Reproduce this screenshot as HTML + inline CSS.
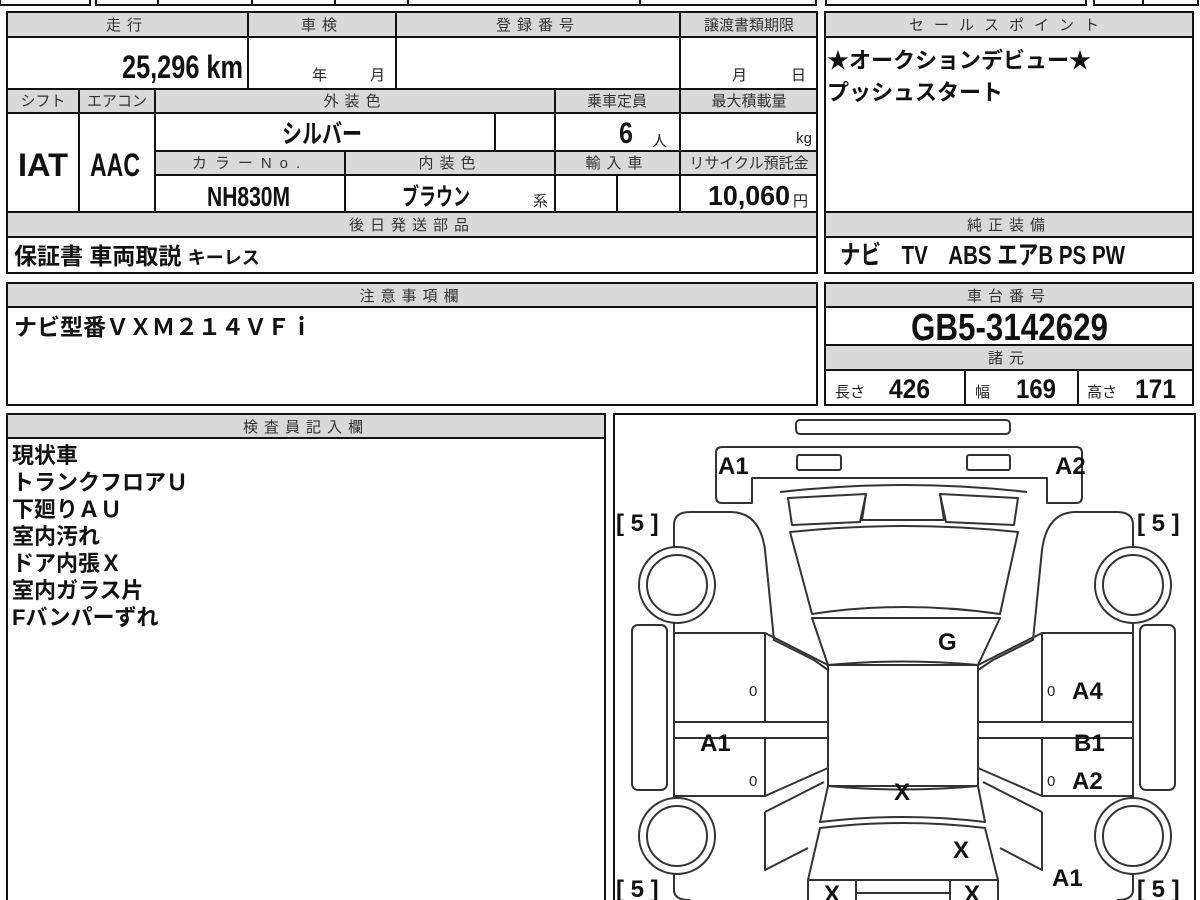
<!DOCTYPE html>
<html><head><meta charset="utf-8"><style>
html,body{margin:0;padding:0;background:#fff;width:1200px;height:900px;overflow:hidden}
svg{display:block}
.h{font-family:"Liberation Sans","Noto Sans CJK JP",sans-serif;font-size:15px;fill:#333;text-anchor:middle;letter-spacing:6px}
.b{font-family:"Liberation Sans Narrow","Liberation Sans","Noto Sans CJK JP",sans-serif;font-weight:bold;fill:#111}
.j{font-family:"Liberation Sans","Noto Sans CJK JP",sans-serif;font-weight:bold;fill:#111}
.s{font-family:"Liberation Sans","Noto Sans CJK JP",sans-serif;fill:#222;font-size:15px}
</style></head><body>
<svg width="1200" height="900" viewBox="0 0 1200 900" xmlns="http://www.w3.org/2000/svg">
<g stroke="#111" stroke-width="2" fill="none">
<rect x="0" y="-5" width="90" height="10"/>
<rect x="96" y="-5" width="720" height="10"/>
<line x1="158" y1="0" x2="158" y2="5"/><line x1="252" y1="0" x2="252" y2="5"/><line x1="335" y1="0" x2="335" y2="5"/><line x1="408" y1="0" x2="408" y2="5"/><line x1="640" y1="0" x2="640" y2="5"/>
<rect x="826" y="-5" width="260" height="10"/>
<rect x="1094" y="-5" width="104" height="10"/><line x1="1143" y1="0" x2="1143" y2="5"/>
</g>
<g fill="#d9d9d9">
<rect x="7" y="12" width="810" height="25"/>
<rect x="7" y="89" width="810" height="24"/>
<rect x="155" y="151" width="662" height="24"/>
<rect x="7" y="212" width="810" height="25"/>
<rect x="825" y="12" width="368" height="25"/>
<rect x="825" y="212" width="368" height="25"/>
<rect x="7" y="283" width="810" height="24"/>
<rect x="825" y="283" width="368" height="24"/>
<rect x="825" y="345" width="368" height="25"/>
<rect x="7" y="414" width="598" height="24"/>
</g>
<g stroke="#111" stroke-width="2" fill="none">
<rect x="7" y="12" width="810" height="261"/>
<line x1="7" y1="37" x2="817" y2="37"/><line x1="7" y1="89" x2="817" y2="89"/><line x1="7" y1="113" x2="817" y2="113"/>
<line x1="155" y1="151" x2="817" y2="151"/><line x1="155" y1="175" x2="817" y2="175"/>
<line x1="7" y1="212" x2="817" y2="212"/><line x1="7" y1="237" x2="817" y2="237"/>
<line x1="248" y1="12" x2="248" y2="89"/><line x1="396" y1="12" x2="396" y2="89"/><line x1="680" y1="12" x2="680" y2="212"/>
<line x1="79" y1="89" x2="79" y2="212"/><line x1="155" y1="89" x2="155" y2="212"/><line x1="555" y1="89" x2="555" y2="212"/>
<line x1="495" y1="113" x2="495" y2="151"/><line x1="345" y1="151" x2="345" y2="212"/><line x1="617" y1="175" x2="617" y2="212"/>
<rect x="825" y="12" width="368" height="261"/>
<line x1="825" y1="37" x2="1193" y2="37"/><line x1="825" y1="212" x2="1193" y2="212"/><line x1="825" y1="237" x2="1193" y2="237"/>
<rect x="7" y="283" width="810" height="122"/><line x1="7" y1="307" x2="817" y2="307"/>
<rect x="825" y="283" width="368" height="122"/><line x1="825" y1="307" x2="1193" y2="307"/><line x1="825" y1="345" x2="1193" y2="345"/><line x1="825" y1="370" x2="1193" y2="370"/>
<line x1="965" y1="370" x2="965" y2="405"/><line x1="1078" y1="370" x2="1078" y2="405"/>
<rect x="7" y="414" width="598" height="490"/><line x1="7" y1="438" x2="605" y2="438"/>
<rect x="614" y="414" width="581" height="490"/>
</g>
<text class="h" x="127" y="30">走行</text><text class="h" x="322" y="30">車検</text><text class="h" x="538" y="30">登録番号</text>
<text class="h" x="749" y="30" style="letter-spacing:0">譲渡書類期限</text>
<text class="h" x="43" y="106" style="letter-spacing:0">シフト</text><text class="h" x="117" y="106" style="letter-spacing:0">エアコン</text>
<text class="h" x="355" y="106">外装色</text><text class="h" x="617" y="106" style="letter-spacing:0">乗車定員</text><text class="h" x="749" y="106" style="letter-spacing:0">最大積載量</text>
<text class="h" x="250" y="168" style="letter-spacing:8px">カラーNo.</text><text class="h" x="450" y="168">内装色</text><text class="h" x="617" y="168">輸入車</text><text class="h" x="749" y="168" style="letter-spacing:0">リサイクル預託金</text>
<text class="h" x="412" y="230">後日発送部品</text>
<text class="h" x="1009" y="30" style="letter-spacing:10px">セールスポイント</text>
<text class="h" x="1009" y="230">純正装備</text>
<text class="h" x="412" y="301">注意事項欄</text>
<text class="h" x="1009" y="301">車台番号</text>
<text class="h" x="1009" y="363">諸元</text>
<text class="h" x="306" y="432">検査員記入欄</text>
<text class="b" x="122" y="78" font-size="32" textLength="121" lengthAdjust="spacingAndGlyphs">25,296 km</text>
<text class="s" x="312" y="80">年</text><text class="s" x="370" y="80">月</text>
<text class="s" x="732" y="80">月</text><text class="s" x="791" y="80">日</text>
<text class="b" x="18" y="176" font-size="32" textLength="50" lengthAdjust="spacingAndGlyphs">IAT</text>
<text class="b" x="90" y="176" font-size="32" textLength="50" lengthAdjust="spacingAndGlyphs">AAC</text>
<text class="b" x="282" y="143" font-size="26" textLength="80" lengthAdjust="spacingAndGlyphs">シルバー</text>
<text class="b" x="619" y="143" font-size="30" textLength="14" lengthAdjust="spacingAndGlyphs">6</text><text class="s" x="652" y="146">人</text>
<text class="s" x="812" y="143" text-anchor="end">kg</text>
<text class="b" x="207" y="206" font-size="28" textLength="83" lengthAdjust="spacingAndGlyphs">NH830M</text>
<text class="b" x="402" y="205" font-size="24" textLength="68" lengthAdjust="spacingAndGlyphs">ブラウン</text><text class="s" x="533" y="206">系</text>
<text class="b" x="708" y="205" font-size="28" textLength="82" lengthAdjust="spacingAndGlyphs">10,060</text><text class="s" x="793" y="206">円</text>
<text class="j" x="14" y="264" font-size="23">保証書 車両取説 <tspan font-size="18">キーレス</tspan></text>
<text class="j" x="827" y="68" font-size="22">★オークションデビュー★</text>
<text class="j" x="827" y="100" font-size="22">プッシュスタート</text>
<text class="b" x="840" y="264" font-size="26" textLength="285" lengthAdjust="spacingAndGlyphs">ナビ　TV　ABS エアB PS PW</text>
<text class="j" x="14" y="335" font-size="23">ナビ型番ＶＸＭ２１４ＶＦｉ</text>
<text class="b" x="911" y="340" font-size="38" textLength="197" lengthAdjust="spacingAndGlyphs">GB5-3142629</text>
<text class="s" x="835" y="397">長さ</text><text class="b" x="889" y="398" font-size="27" textLength="41" lengthAdjust="spacingAndGlyphs">426</text>
<text class="s" x="975" y="397">幅</text><text class="b" x="1016" y="398" font-size="27" textLength="40" lengthAdjust="spacingAndGlyphs">169</text>
<text class="s" x="1087" y="397">高さ</text><text class="b" x="1135" y="398" font-size="27" textLength="41" lengthAdjust="spacingAndGlyphs">171</text>
<g class="j" font-size="22">
<text x="12" y="463">現状車</text><text x="12" y="490">トランクフロアＵ</text><text x="12" y="517">下廻りＡＵ</text><text x="12" y="544">室内汚れ</text><text x="12" y="571">ドア内張Ｘ</text><text x="12" y="598">室内ガラス片</text><text x="12" y="625">Fバンパーずれ</text>
</g>
<g stroke="#333" stroke-width="2" fill="none" stroke-linejoin="round">
<rect x="796" y="420" width="214" height="14" rx="4"/>
<path d="M722 447 H1076 Q1082 447 1082 453 V497 Q1082 503 1076 503 H1047 V478 H752 V503 H722 Q716 503 716 497 V453 Q716 447 722 447Z"/>
<rect x="797" y="455" width="44" height="15" rx="2"/><rect x="967" y="455" width="43" height="15" rx="2"/>
<path d="M780 492 Q903 478 1027 492"/>
<path d="M788 498 L866 494 L860 522 L792 525Z"/><path d="M940 494 L1018 498 L1014 525 L946 522Z"/>
<path d="M866 494 L862 520 L944 520 L940 494"/>
<path d="M790 532 Q903 520 1018 532 L1000 614 Q903 600 812 614Z"/>
<path d="M812 618 L1000 618 L978 665 Q903 658 828 665Z"/>
<rect x="828" y="665" width="150" height="121"/>
<path d="M828 786 Q903 793 978 786 L985 822 Q903 812 820 822Z"/>
<path d="M820 828 Q903 818 985 828 L998 880 H808Z"/>
<path d="M808 880 H856 V900 M808 880 V900"/><path d="M950 880 H998 V900 M950 880 V900"/><path d="M856 893 H950"/>
<path d="M674 548 V525 Q674 512 690 512 H730 Q760 512 765 550 L774 640 L814 660 L828 670"/>
<path d="M674 623 V797"/>
<path d="M674 633 H765 V722 M674 722 H828 M674 738 H828 M765 738 V796 H674"/>
<path d="M765 633 L828 665 M765 796 L828 768 M765 812 L824 782"/>
<path d="M765 812 V870 L808 848"/>
<path d="M674 874 V890 Q674 900 690 900"/>
<rect x="632" y="625" width="35" height="165" rx="6"/>
<circle cx="677" cy="585" r="38"/><circle cx="677" cy="585" r="30"/>
<circle cx="677" cy="836" r="38"/><circle cx="677" cy="836" r="30"/>
<path d="M1133 548 V525 Q1133 512 1117 512 H1076 Q1047 512 1042 550 L1033 640 L993 660 L978 670"/>
<path d="M1133 623 V797"/>
<path d="M1133 633 H1042 V722 M1133 722 H978 M1133 738 H978 M1042 738 V796 H1133"/>
<path d="M1042 633 L978 665 M1042 796 L978 768 M1042 812 L983 782"/>
<path d="M1042 812 V870 L1000 848"/>
<path d="M1133 874 V890 Q1133 900 1117 900"/>
<rect x="1140" y="625" width="35" height="165" rx="6"/>
<circle cx="1133" cy="585" r="38"/><circle cx="1133" cy="585" r="30"/>
<circle cx="1133" cy="836" r="38"/><circle cx="1133" cy="836" r="30"/>
</g>
<g class="b" font-size="24">
<text x="718" y="474">A1</text><text x="1055" y="474">A2</text>
<text x="938" y="650">G</text>
<text x="1072" y="699">A4</text><text x="700" y="751">A1</text><text x="1074" y="751">B1</text><text x="1072" y="789">A2</text>
<text x="894" y="800">X</text><text x="953" y="858">X</text><text x="1052" y="886">A1</text>
<text x="824" y="902">X</text><text x="964" y="902">X</text>
</g>
<g class="s" font-size="18">
<text x="749" y="696">0</text><text x="749" y="786">0</text><text x="1047" y="696">0</text><text x="1047" y="786">0</text>
</g>
<g class="b" font-size="24">
<text x="616" y="531">[ 5 ]</text><text x="1137" y="531">[ 5 ]</text><text x="616" y="897">[ 5 ]</text><text x="1137" y="897">[ 5 ]</text>
</g>
</svg>
</body></html>
